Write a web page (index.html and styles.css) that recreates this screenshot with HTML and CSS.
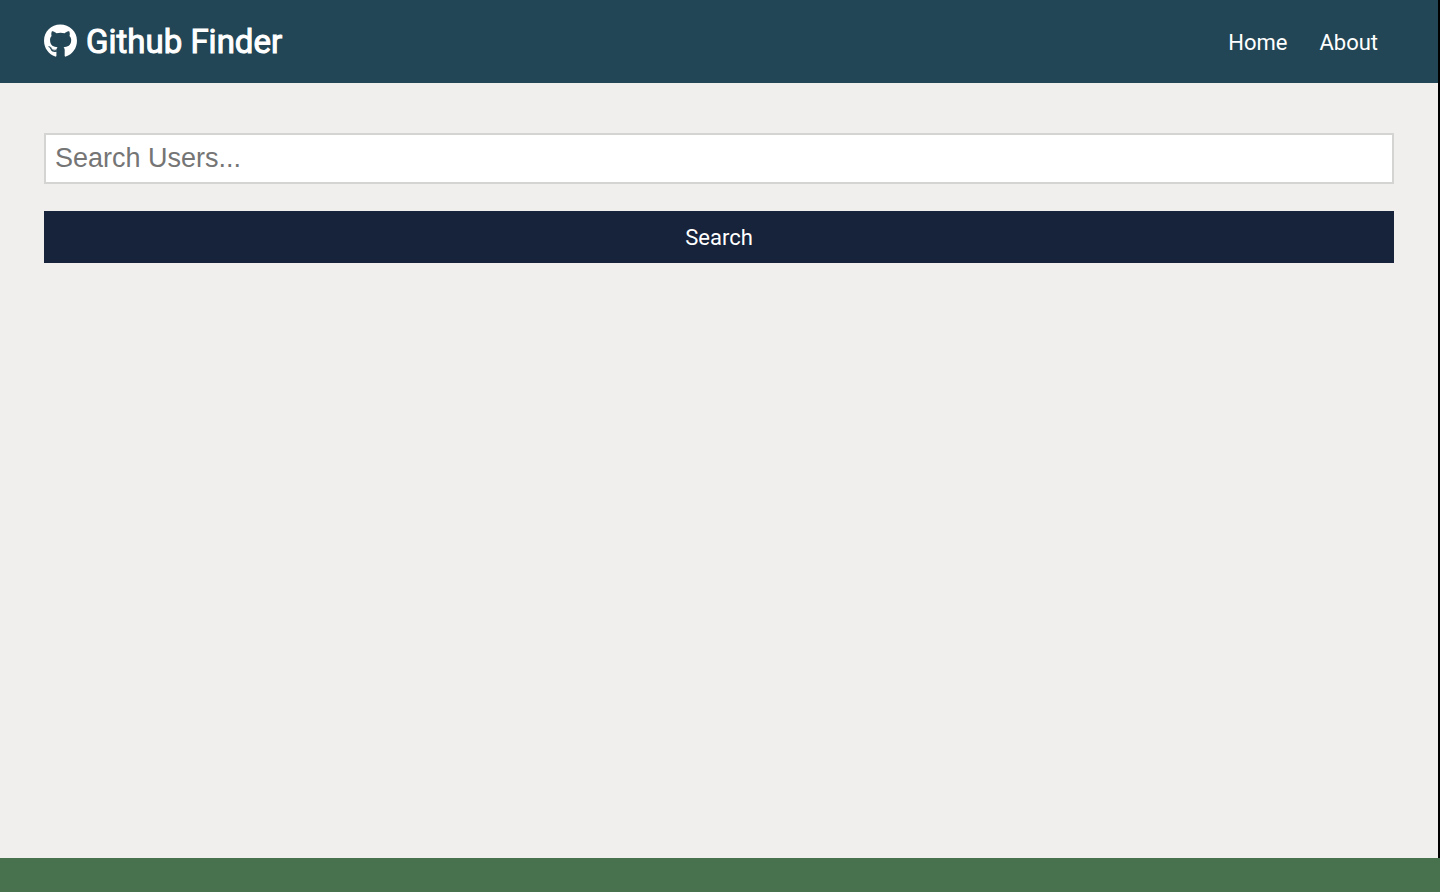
FILE: index.html
```html
<!DOCTYPE html>
<html lang="en">
<head>
  <meta charset="utf-8">
  <meta name="viewport" content="width=device-width, initial-scale=1">
  <title>Github Finder</title>
  <link rel="stylesheet" href="styles.css">
</head>
<body>
  <div class="app">
    <nav class="navbar">
      <h1 class="brand">
        <svg class="brand-icon" viewBox="0 0 496 512" aria-hidden="true"><path fill="currentColor" d="M165.900 397.400c0 2-2.300 3.600-5.200 3.600-3.300.3-5.600-1.300-5.600-3.600 0-2 2.300-3.600 5.200-3.600 3-.3 5.600 1.300 5.600 3.600zm-31.100-4.500c-.7 2 1.300 4.300 4.300 4.900 2.600 1 5.600 0 6.200-2s-1.300-4.300-4.300-5.200c-2.600-.7-5.500.3-6.200 2.300zm44.200-1.700c-2.900.7-4.900 2.600-4.600 4.900.3 2 2.900 3.300 5.900 2.600 2.900-.7 4.900-2.600 4.600-4.600-.3-1.900-3-3.200-5.900-2.900zM244.800 8C106.100 8 0 113.300 0 252c0 110.900 69.800 205.800 169.500 239.200 12.800 2.300 17.300-5.600 17.300-12.100 0-6.200-.3-40.400-.3-61.400 0 0-70 15-84.700-29.800 0 0-11.400-29.100-27.800-36.600 0 0-22.900-15.700 1.600-15.400 0 0 24.900 2 38.600 25.800 21.900 38.600 58.600 27.500 72.900 20.900 2.300-16 8.800-27.100 16-33.700-55.900-6.200-112.300-14.300-112.300-110.500 0-27.500 7.600-41.300 23.600-58.900-2.600-6.500-11.100-33.300 2.600-67.900 20.900-6.500 69 27 69 27 20-5.600 41.500-8.500 62.800-8.500s42.800 2.900 62.800 8.500c0 0 48.100-33.600 69-27 13.700 34.700 5.200 61.400 2.600 67.900 16 17.700 25.800 31.500 25.800 58.900 0 96.500-58.900 104.200-114.800 110.500 9.200 7.900 17 22.900 17 46.400 0 33.700-.3 75.400-.3 83.600 0 6.500 4.600 14.400 17.300 12.100C428.200 457.800 496 362.900 496 252 496 113.300 383.500 8 244.800 8zM97.200 352.900c-1.300 1-1 3.300.7 5.200 1.600 1.600 3.900 2.300 5.200 1 1.300-1 1-3.300-.7-5.200-1.600-1.600-3.900-2.300-5.200-1zm-10.800-8.100c-.7 1.300.3 2.900 2.300 3.900 1.600 1 3.600.7 4.300-.7.700-1.300-.3-2.900-2.300-3.900-2-.6-3.600-.3-4.300.7zm32.400 35.600c-1.600 1.300-1 4.300 1.300 6.200 2.300 2.300 5.200 2.600 6.500 1 1.300-1.300.7-4.300-1.300-6.200-2.200-2.300-5.200-2.600-6.500-1zm-11.400-14.700c-1.600 1-1.600 3.600 0 5.900 1.600 2.300 4.300 3.300 5.600 2.300 1.600-1.300 1.600-3.900 0-6.200-1.400-2.300-4-3.300-5.600-2z"/></svg>
        Github Finder
      </h1>
      <ul class="nav-links">
        <li><a href="#home">Home</a></li>
        <li><a href="#about">About</a></li>
      </ul>
    </nav>
    <main class="container">
      <form class="search-form">
        <input class="search-input" type="text" name="text" placeholder="Search Users..." aria-label="Search Users">
        <button class="search-button" type="submit">Search</button>
      </form>
    </main>
  </div>
  <footer class="bottom-strip"></footer>
</body>
</html>
```

FILE: styles.css
```css
* {
  box-sizing: border-box;
  margin: 0;
  padding: 0;
}

body {
  display: flex;
  flex-direction: column;
  min-height: 100vh;
  font-family: Roboto, "Liberation Sans", sans-serif;
  color: #333;
  background: #48724d;
}

.app {
  flex: 1;
  background: #f0efee;
  border-right: 2px solid #000;
}

.navbar {
  display: flex;
  align-items: center;
  justify-content: space-between;
  padding: 20px 44px;
  color: #fff;
  background: #224655;
}

.brand {
  display: flex;
  align-items: center;
  gap: 9px;
  font-size: 33px;
  font-weight: 400;
  line-height: 43px;
  -webkit-text-stroke: 1px currentColor;
}

.brand-icon {
  width: 33px;
  height: 34px;
  margin-bottom: 2px;
}

.nav-links {
  display: flex;
  list-style: none;
}

.nav-links a {
  display: block;
  padding: 2px 16px 0;
  font-size: 22px;
  line-height: 32px;
  color: #fff;
  text-decoration: none;
}

.container {
  padding: 50px 44px;
}

.search-form {
  display: flex;
  flex-direction: column;
  gap: 27px;
}

.search-input {
  width: 100%;
  height: 51px;
  padding: 0 9px;
  font-family: "Liberation Sans", Arial, sans-serif;
  font-size: 27px;
  color: #333;
  background: #fff;
  border: 2px solid #d4d4d3;
  border-radius: 0;
}

.search-input::placeholder {
  color: #757575;
}

.search-button {
  width: 100%;
  height: 52px;
  font-family: inherit;
  font-size: 22px;
  color: #fff;
  background: #17223b;
  border: 0;
  cursor: pointer;
}

.bottom-strip {
  height: 34px;
}
```
